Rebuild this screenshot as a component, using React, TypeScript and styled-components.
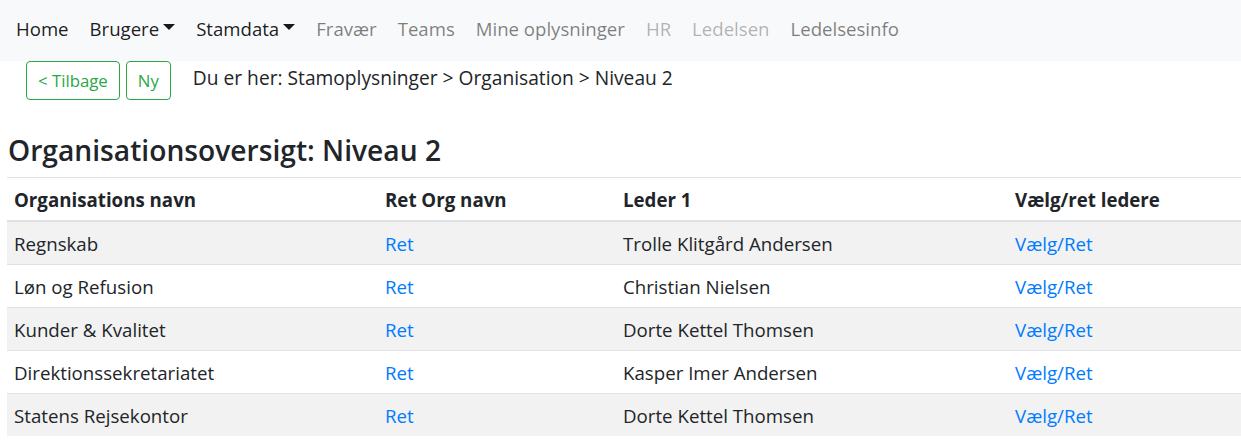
import React from 'react';
import styled, { createGlobalStyle } from 'styled-components';

const GlobalStyle = createGlobalStyle`
  html, body {
    margin: 0;
    padding: 0;
    background: #fff;
  }
  body {
    font-family: "Open Sans", "Noto Sans", sans-serif;
    font-size: 18.7px;
    color: #212529;
    overflow: hidden;
  }
`;

const NavBar = styled.nav`
  display: flex;
  align-items: center;
  height: 61px;
  padding: 0 16px 5px;
  box-sizing: border-box;
  background: #f8f9fa;
`;

const NavItem = styled.a<{ $tone?: 'active' | 'muted' | 'disabled' }>`
  display: flex;
  align-items: center;
  margin-right: 21px;
  font-size: 18.6px;
  text-decoration: none;
  color: ${p =>
    p.$tone === 'active' ? 'rgba(0,0,0,0.9)' : p.$tone === 'disabled' ? 'rgba(0,0,0,0.3)' : 'rgba(0,0,0,0.5)'};
`;

const Caret = styled.span`
  display: inline-block;
  margin-left: 4px;
  margin-top: -2px;
  width: 0;
  height: 0;
  border-top: 6px solid currentColor;
  border-left: 6px solid transparent;
  border-right: 6px solid transparent;
`;

const ActionRow = styled.div`
  display: flex;
  align-items: flex-start;
  padding-left: 26px;
  height: 39px;
`;

const OutlineButton = styled.button`
  height: 39px;
  padding: 0 11px;
  margin-right: 6px;
  font-family: inherit;
  font-size: 16.8px;
  color: #28a745;
  background: transparent;
  border: 1px solid #28a745;
  border-radius: 4px;
`;

const Breadcrumb = styled.div`
  margin-left: 16px;
  line-height: 34px;
  font-size: 19.2px;
  color: #212529;
`;

const Heading = styled.h2`
  margin: 30px 0 0 8px;
  font-size: 28.2px;
  font-weight: 600;
  line-height: 40px;
  color: #212529;
`;

const Table = styled.table`
  margin: 7px 0 0 7px;
  width: 1300px;
  border-collapse: collapse;
  table-layout: fixed;
  font-size: 18.7px;

  th, td {
    text-align: left;
    padding: 0 7px;
    height: 42px;
    border-top: 1px solid #dee2e6;
  }
  th {
    font-weight: 700;
    height: 42px;
    border-bottom: 2px solid #dee2e6;
  }
  tbody tr:nth-of-type(odd) {
    background: rgba(0, 0, 0, 0.05);
  }
`;

const Link = styled.a`
  color: #007bff;
  text-decoration: none;
`;

const rows = [
  { name: 'Regnskab', leader: 'Trolle Klitgård Andersen' },
  { name: 'Løn og Refusion', leader: 'Christian Nielsen' },
  { name: 'Kunder & Kvalitet', leader: 'Dorte Kettel Thomsen' },
  { name: 'Direktionssekretariatet', leader: 'Kasper Imer Andersen' },
  { name: 'Statens Rejsekontor', leader: 'Dorte Kettel Thomsen' },
];

export default function App() {
  return (
    <>
      <GlobalStyle />
      <NavBar>
        <NavItem $tone="active">Home</NavItem>
        <NavItem $tone="active">Brugere<Caret /></NavItem>
        <NavItem $tone="active">Stamdata<Caret /></NavItem>
        <NavItem>Fravær</NavItem>
        <NavItem>Teams</NavItem>
        <NavItem>Mine oplysninger</NavItem>
        <NavItem $tone="disabled">HR</NavItem>
        <NavItem $tone="disabled">Ledelsen</NavItem>
        <NavItem>Ledelsesinfo</NavItem>
      </NavBar>
      <ActionRow>
        <OutlineButton>&lt; Tilbage</OutlineButton>
        <OutlineButton>Ny</OutlineButton>
        <Breadcrumb>Du er her: Stamoplysninger &gt; Organisation &gt; Niveau 2</Breadcrumb>
      </ActionRow>
      <Heading>Organisationsoversigt: Niveau 2</Heading>
      <Table>
        <colgroup>
          <col style={{ width: 371 }} />
          <col style={{ width: 238 }} />
          <col style={{ width: 392 }} />
          <col />
        </colgroup>
        <thead>
          <tr>
            <th>Organisations navn</th>
            <th>Ret Org navn</th>
            <th>Leder 1</th>
            <th>Vælg/ret ledere</th>
          </tr>
        </thead>
        <tbody>
          {rows.map(r => (
            <tr key={r.name}>
              <td>{r.name}</td>
              <td><Link>Ret</Link></td>
              <td>{r.leader}</td>
              <td><Link>Vælg/Ret</Link></td>
            </tr>
          ))}
        </tbody>
      </Table>
    </>
  );
}
